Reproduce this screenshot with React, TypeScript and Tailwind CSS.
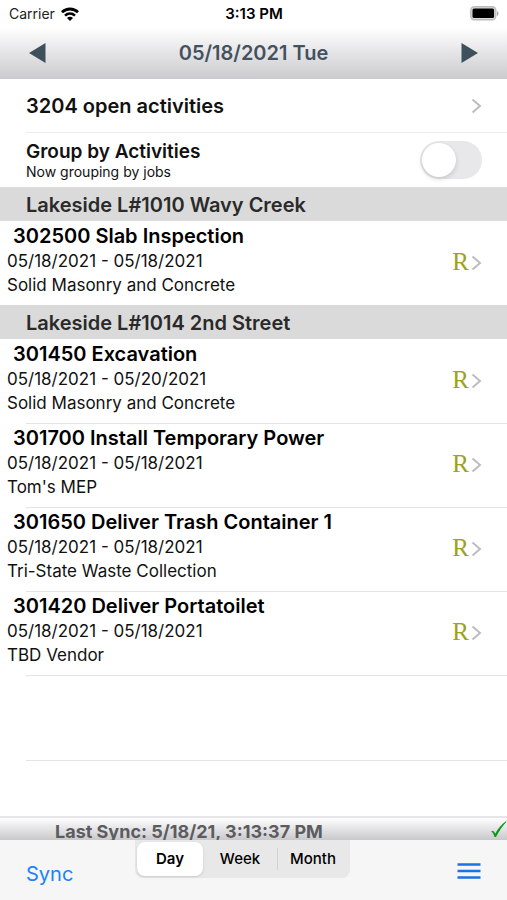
import { useState } from "react";

type Activity = {
  id: string;
  title: string;
  dates: string;
  vendor: string;
};

type Job = {
  name: string;
  activities: Activity[];
};

const jobs: Job[] = [
  {
    name: "Lakeside L#1010 Wavy Creek",
    activities: [
      {
        id: "302500",
        title: "Slab Inspection",
        dates: "05/18/2021 - 05/18/2021",
        vendor: "Solid Masonry and Concrete",
      },
    ],
  },
  {
    name: "Lakeside L#1014 2nd Street",
    activities: [
      {
        id: "301450",
        title: "Excavation",
        dates: "05/18/2021 - 05/20/2021",
        vendor: "Solid Masonry and Concrete",
      },
      {
        id: "301700",
        title: "Install Temporary Power",
        dates: "05/18/2021 - 05/18/2021",
        vendor: "Tom's MEP",
      },
      {
        id: "301650",
        title: "Deliver Trash Container 1",
        dates: "05/18/2021 - 05/18/2021",
        vendor: "Tri-State Waste Collection",
      },
      {
        id: "301420",
        title: "Deliver Portatoilet",
        dates: "05/18/2021 - 05/18/2021",
        vendor: "TBD Vendor",
      },
    ],
  },
];

function Chevron() {
  return (
    <svg width="11" height="16" viewBox="0 0 11 16" fill="none" aria-hidden="true">
      <path d="M1.5 1.5 9 8l-7.500 6.500" stroke="#bdbdc0" strokeWidth="2" />
    </svg>
  );
}

function StatusBar() {
  return (
    <div className="grid h-[27px] grid-cols-3 items-center pr-2 pl-[9px] text-sm text-[#222]">
      <div className="flex items-center gap-1.5">
        <span>Carrier</span>
        <svg width="18" height="14" viewBox="0 0 18 14" fill="none" aria-hidden="true">
          <path d="M1 5.200C5.500.9 12.500.9 17 5.200" stroke="#000" strokeWidth="2.800" />
          <path d="M4 8.600c2.900-2.700 7.100-2.700 10 0" stroke="#000" strokeWidth="2.600" />
          <path d="M9 14 6 11c1.600-1.600 4.400-1.600 6 0z" fill="#000" />
        </svg>
      </div>
      <span className="text-center text-[15px] font-semibold text-black">3:13 PM</span>
      <svg className="justify-self-end" width="29" height="15" viewBox="0 0 29 15" aria-hidden="true">
        <rect x=".8" y=".8" width="25" height="13" rx="3.500" fill="#ddd" stroke="#bcbcbc" strokeWidth="1.400" />
        <rect x="2.500" y="2.500" width="21.600" height="9.600" rx="1.500" fill="#000" />
        <path d="M27 5c2 .8 2 4.200 0 5z" fill="#a8a8a8" />
      </svg>
    </div>
  );
}

function ActivityRow({ activity, divider }: { activity: Activity; divider: boolean }) {
  return (
    <li className="relative">
      <a href={`#${activity.id}`} className="flex h-[84px] items-center justify-between pr-[25px] pl-[7px]">
        <div className="self-start pt-[3px] text-[17px] leading-6">
          <h3 className="pl-1.5 text-xl leading-[25px] font-semibold text-black">
            {activity.id} {activity.title}
          </h3>
          <p>{activity.dates}</p>
          <p>{activity.vendor}</p>
        </div>
        <div className="flex items-center gap-0.5">
          <span className="pb-0.5 font-['Liberation_Serif',serif] text-[25px] leading-7 text-[#9da11d]">R</span>
          <Chevron />
        </div>
      </a>
      {divider && <div className="absolute right-0 -bottom-px left-[26px] h-px bg-[#e4e4e6]" />}
    </li>
  );
}

const views = ["Day", "Week", "Month"];

export default function App() {
  const [grouped, setGrouped] = useState(false);
  const [view, setView] = useState("Day");

  return (
    <div className="flex min-h-screen flex-col bg-white font-[Inter,sans-serif] text-[#111]">
      <StatusBar />

      {/* Date navigation */}
      <header className="flex h-[52px] items-center justify-between bg-linear-to-b from-white to-[#cbcbcf] px-[29px] text-[#44525f]">
        <button aria-label="Previous day">
          <svg width="17" height="20" viewBox="0 0 17 20" fill="#3f505d" aria-hidden="true">
            <path d="M16.500 0v20L0 10z" />
          </svg>
        </button>
        <h1 className="text-xl font-semibold">05/18/2021 Tue</h1>
        <button aria-label="Next day">
          <svg width="17" height="20" viewBox="0 0 17 20" fill="#3f505d" aria-hidden="true">
            <path d="M.5 0v20L17 10z" />
          </svg>
        </button>
      </header>

      <main className="flex flex-1 flex-col">
        <a href="#open" className="ml-[26px] flex h-[54px] items-center justify-between border-b border-[#ececee] pr-[25px]">
          <span className="text-xl font-semibold">3204 open activities</span>
          <Chevron />
        </a>
        <div className="flex h-[54px] items-center justify-between pr-[25px] pl-[26px]">
          <label htmlFor="group">
            <span className="block text-[19px] leading-6 font-semibold">Group by Activities</span>
            <span className="block text-sm leading-4">Now grouping by jobs</span>
          </label>
          <input
            id="group"
            type="checkbox"
            role="switch"
            checked={grouped}
            onChange={(e) => setGrouped(e.target.checked)}
            className="h-[38px] w-[62px] appearance-none rounded-full bg-[#e8e8ea] p-0.5 before:block before:size-[34px] before:rounded-full before:bg-white before:shadow-[0_2px_5px_rgba(0,0,0,0.15)] checked:bg-green-500 checked:before:translate-x-6"
          />
        </div>

        {jobs.map((job) => (
          <section key={job.name}>
            <h2 className="h-[34px] bg-[#dadada] pl-[26px] text-xl leading-9 font-semibold text-[#2a2a2a]">
              {job.name}
            </h2>
            <ul>
              {job.activities.map((activity, i) => (
                <ActivityRow
                  key={activity.id}
                  activity={activity}
                  divider={i < job.activities.length - 1 || job === jobs[jobs.length - 1]}
                />
              ))}
            </ul>
          </section>
        ))}
        <div className="ml-[26px] h-[86px] border-b border-[#e4e4e6]" />
      </main>

      {/* Sync status */}
      <div className="flex h-6 items-center justify-between border-t-2 border-[#e6e6e8] bg-linear-to-b from-white to-[#c9c9cd] pl-[55px]">
        <p className="pt-1.5 text-lg leading-6 font-bold text-[#5c5c5e]">Last Sync: 5/18/21, 3:13:37 PM</p>
        <svg width="16" height="16" viewBox="0 0 16 16" aria-label="Synced" role="img">
          <path d="M0 10.500c1.200-.9 2.700-.8 3.200.2l1 2C7 7.500 10.500 3.200 15 .2l.6.6C11.500 5 8 10 5 16H3.600C2.800 13.500 1.800 11.300 0 10.500z" fill="#0a9a16" />
        </svg>
      </div>

      <footer className="grid h-[60px] grid-cols-[109px_auto_1fr] items-start bg-[#f6f6f7] px-[26px]">
        <button className="mt-5 justify-self-start text-xl leading-7 text-[#1a82fb]">Sync</button>
        <div className="flex h-[38px] rounded-b-lg bg-[#e8e8e9] p-0.5">
          {views.map((name) => (
            <button
              key={name}
              aria-pressed={view === name}
              onClick={() => setView(name)}
              className={
                view === name
                  ? "w-[66px] rounded-lg bg-white text-[15px] font-semibold text-black shadow"
                  : "my-1.5 w-[74px] border-[#d2d2d4] text-[15px] font-medium text-black last:w-[71px] last:border-l"
              }
            >
              {name}
            </button>
          ))}
        </div>
        <button aria-label="Menu" className="mt-[23px] justify-self-end">
          <svg width="24" height="16" viewBox="0 0 24 16" stroke="#1a73e0" strokeWidth="2.400" aria-hidden="true">
            <path d="M.5 1.500h23M.5 8h23M.5 14.500h23" />
          </svg>
        </button>
      </footer>
    </div>
  );
}
